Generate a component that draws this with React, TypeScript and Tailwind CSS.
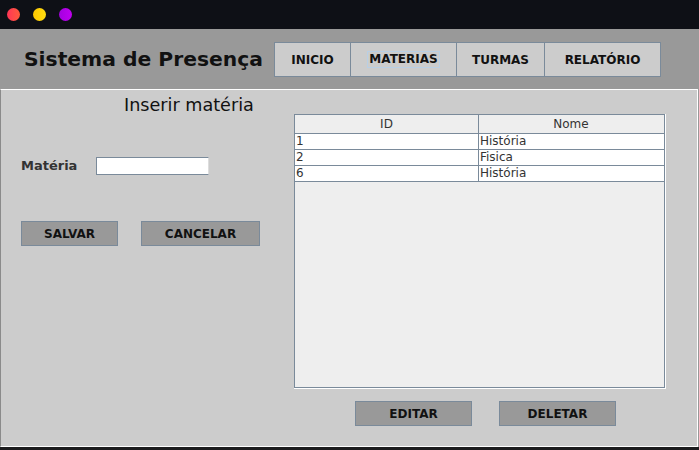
const rows = [
  { id: "1", nome: "História" },
  { id: "2", nome: "Fisica" },
  { id: "6", nome: "História" },
];

const navItems = [
  { label: "INICIO", width: "w-[77px]", focus: false },
  { label: "MATERIAS", width: "w-[107px]", focus: true },
  { label: "TURMAS", width: "w-[89px]", focus: false },
  { label: "RELATÓRIO", width: "w-[117px]", focus: false },
];

function GrayButton({ label, width }: { label: string; width: string }) {
  return (
    <button
      className={`${width} h-[25px] bg-[#999999] border border-[#7a8a9a] text-[12px] font-bold text-[#111] flex items-center justify-center`}
    >
      {label}
    </button>
  );
}

export default function App() {
  return (
    <div
      className="w-[699px] h-[450px] overflow-hidden flex flex-col bg-[#999999]"
      style={{ fontFamily: '"DejaVu Sans", "Liberation Sans", sans-serif' }}
    >
      {/* title bar */}
      <div className="h-[29px] bg-[#0e1016] flex items-center gap-[13px] pl-[7px] shrink-0">
        <div className="w-[13px] h-[13px] rounded-full bg-gradient-to-r from-[#ff3355] to-[#ff5a3a]" />
        <div className="w-[13px] h-[13px] rounded-full bg-gradient-to-r from-[#ffc800] to-[#ffdd10]" />
        <div className="w-[13px] h-[13px] rounded-full bg-gradient-to-r from-[#a400e0] to-[#c000f0]" />
      </div>

      {/* header */}
      <div className="h-[60px] flex items-center shrink-0 pt-[1px]">
        <h1 className="ml-[24px] w-[250px] text-[20.3px] font-bold text-[#111]">Sistema de Presença</h1>
        <div className="flex">
          {navItems.map((item) => (
            <div
              key={item.label}
              className={`${item.width} h-[35px] bg-[#cccccc] border border-[#7a8a9a] -ml-px first:ml-0 flex items-center justify-center text-[12px] font-bold text-[#111]`}
            >
              <span className={item.focus ? "border border-[#b8cfe5] px-px leading-[15px]" : ""}>{item.label}</span>
            </div>
          ))}
        </div>
      </div>

      {/* main panel */}
      <div className="w-[698px] h-[358px] bg-[#cccccc] border-t border-r border-b border-white border-l border-l-[#8a8a8a] flex shrink-0">
        <div className="w-[293px] flex flex-col">
          <div className="mt-[5px] h-[20px] pl-[123px] text-[17.6px] leading-[20px] text-[#111]">Inserir matéria</div>
          <div className="mt-[42px] h-[18px] flex items-center">
            <label className="ml-[20px] w-[75px] text-[13px] font-bold text-[#333]">Matéria</label>
            <input className="w-[113px] h-[18px] bg-white border border-[#7a8a9a] border-r-[#dddddd] border-b-[#7a8a9a] outline-none" />
          </div>
          <div className="mt-[46px] flex gap-[23px] ml-[20px]">
            <GrayButton label="SALVAR" width="w-[97px]" />
            <GrayButton label="CANCELAR" width="w-[119px]" />
          </div>
        </div>

        <div className="flex flex-col">
          <div className="mt-[24px] w-[372px] h-[275px] border-r border-b border-white">
            <div className="w-full h-full border border-[#7a8a9a] bg-[#eeeeee] flex flex-col text-[12px] text-[#333]">
              <div className="h-[19px] flex border-b border-[#7a8a9a] bg-[#eeeeee]">
                <div className="w-[184px] border-r border-[#7a8a9a] text-center leading-[18px]">ID</div>
                <div className="w-[184px] text-center leading-[18px]">Nome</div>
              </div>
              {rows.map((r) => (
                <div key={r.id} className="h-[16px] flex bg-white border-b border-[#7a8a9a] leading-[15px]">
                  <div className="w-[184px] border-r border-[#7a8a9a] pl-px">{r.id}</div>
                  <div className="w-[184px] pl-px">{r.nome}</div>
                </div>
              ))}
            </div>
          </div>
          <div className="mt-[12px] ml-[61px] flex gap-[27px]">
            <GrayButton label="EDITAR" width="w-[117px]" />
            <GrayButton label="DELETAR" width="w-[117px]" />
          </div>
        </div>
      </div>

      <div className="flex-1 bg-[#1c1c1e]" />
    </div>
  );
}
